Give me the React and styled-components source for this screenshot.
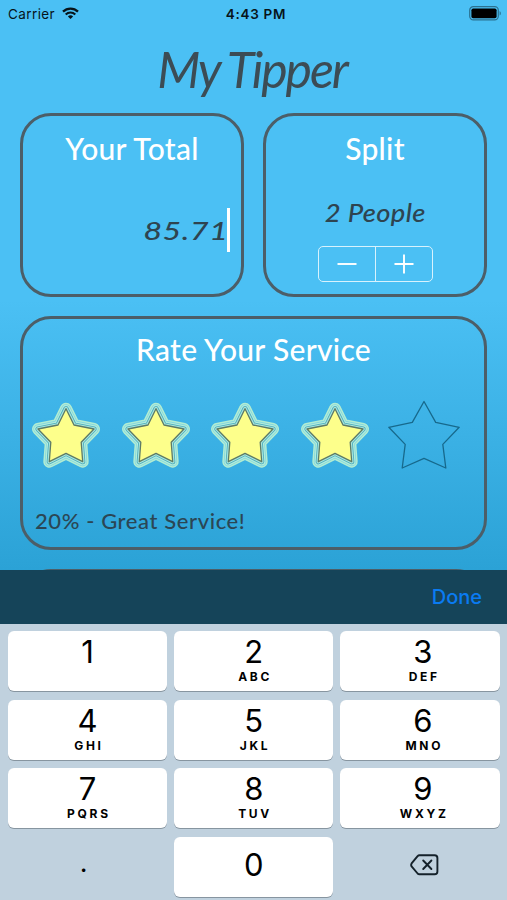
import React from "react";
import styled, { createGlobalStyle } from "styled-components";

const GlobalStyle = createGlobalStyle`
  * {
    box-sizing: border-box;
  }

  body {
    margin: 0;
    overflow: hidden;
  }
`;

const keys = [
  { digit: "1", letters: "" },
  { digit: "2", letters: "ABC" },
  { digit: "3", letters: "DEF" },
  { digit: "4", letters: "GHI" },
  { digit: "5", letters: "JKL" },
  { digit: "6", letters: "MNO" },
  { digit: "7", letters: "PQRS" },
  { digit: "8", letters: "TUV" },
  { digit: "9", letters: "WXYZ" },
];

const FILLED_STAR =
  "M36 10.7 L44 27 L64 31 L51.2 44.3 L52.7 63.7 L36 55.3 L19.3 63.7 L20.8 44.3 L8 31 L28 27 Z";
const EMPTY_STAR =
  "M36 3.5 L47.7 24.4 L71.2 29.3 L54.8 46.4 L57.8 70 L36 60.4 L14.2 70 L17.2 46.4 L0.8 29.3 L24.3 24.4 Z";

const Star = ({ filled }) => (
  <StarIcon viewBox="0 0 72 74">
    {filled ? (
      <>
        <path d={FILLED_STAR} stroke="#b2edd2" strokeWidth="12" />
        <path d={FILLED_STAR} stroke="#7dd3df" strokeWidth="9" />
        <path d={FILLED_STAR} stroke="#b0ecdc" strokeWidth="7.8" />
        <path d={FILLED_STAR} stroke="#4aa9bd" strokeWidth="5.2" />
        <path d={FILLED_STAR} stroke="#a6e6dd" strokeWidth="3.6" />
        <path d={FILLED_STAR} fill="#fdff8b" stroke="#5d7a66" strokeWidth="1.3" />
      </>
    ) : (
      <path d={EMPTY_STAR} fill="none" stroke="#17698c" strokeWidth="1.3" />
    )}
  </StarIcon>
);

const WifiIcon = () => (
  <svg width="17" height="13" viewBox="0 0 17 13" fill="none" stroke="#07141a">
    <path d="M1 4.6 C5.2 0.5 11.8 0.5 16 4.6" strokeWidth="2.3" />
    <path d="M3.7 7.5 C6.4 4.9 10.6 4.9 13.3 7.5" strokeWidth="2.1" />
    <path d="M8.5 12 L5.9 9.4 C7.3 8 9.7 8 11.1 9.4 Z" fill="#07141a" stroke="none" />
  </svg>
);

const BatteryIcon = () => (
  <svg width="33" height="15" viewBox="0 0 33 15">
    <rect x="0.7" y="0.7" width="28.6" height="13.2" rx="3.6" fill="none" stroke="#2b7190" strokeWidth="1.2" />
    <rect x="2.4" y="2.4" width="25.2" height="9.8" rx="1.8" fill="#000" />
    <path d="M30.6 5 C32.3 5.8 32.3 8.8 30.6 9.6 Z" fill="#2b7190" />
  </svg>
);

const BackspaceIcon = () => (
  <svg
    width="29"
    height="22"
    viewBox="0 0 29 22"
    fill="none"
    stroke="#14212a"
    strokeWidth="1.9"
    strokeLinecap="round"
    strokeLinejoin="round"
  >
    <path d="M9.4 1.3 H24.6 Q27.4 1.3 27.4 4.1 V17.5 Q27.4 20.3 24.6 20.3 H9.4 Q8.4 20.3 7.6 19.5 L1.6 12.4 Q0.7 10.9 1.6 9.4 L7.6 2.1 Q8.4 1.3 9.4 1.3 Z" />
    <path d="M13.2 6.5 L21.4 15 M21.4 6.5 L13.2 15" />
  </svg>
);

const App = () => {
  const rating = 4;

  return (
    <Phone>
      <GlobalStyle />
      <Screen>
        <StatusBar>
          <Carrier>
            Carrier
            <WifiIcon />
          </Carrier>
          <Clock>4:43 PM</Clock>
          <Battery>
            <BatteryIcon />
          </Battery>
        </StatusBar>
        <Title>My Tipper</Title>
        <Cards>
          <CardRow>
            <Card $height={184}>
              <CardTitle>Your Total</CardTitle>
              <TotalField>
                <TotalValue>85.71</TotalValue>
                <Cursor />
              </TotalField>
            </Card>
            <Card $height={184}>
              <CardTitle>Split</CardTitle>
              <People>2 People</People>
              <Stepper>
                <StepButton aria-label="Decrease">
                  <svg width="20" height="20" stroke="#fff" strokeWidth="1.9">
                    <path d="M0.5 10 H19.5" />
                  </svg>
                </StepButton>
                <StepButton aria-label="Increase">
                  <svg width="20" height="20" stroke="#fff" strokeWidth="1.9">
                    <path d="M0.5 10 H19.5 M10 0.5 V19.5" />
                  </svg>
                </StepButton>
              </Stepper>
            </Card>
          </CardRow>
          <Card $height={234}>
            <CardTitle>Rate Your Service</CardTitle>
            <Stars>
              {[1, 2, 3, 4, 5].map((value) => (
                <Star key={value} filled={value <= rating} />
              ))}
            </Stars>
            <RatingText>20% - Great Service!</RatingText>
          </Card>
          <Card $height={184} />
        </Cards>
      </Screen>
      <Toolbar>
        <DoneButton>Done</DoneButton>
      </Toolbar>
      <Keypad>
        {keys.map((key) => (
          <Key key={key.digit}>
            <Digit>{key.digit}</Digit>
            <Letters>{key.letters}</Letters>
          </Key>
        ))}
        <PlainKey $padding="0 8px 8px 0">.</PlainKey>
        <Key $centered>
          <Digit>0</Digit>
        </Key>
        <PlainKey $padding="0 0 3px 9px" aria-label="Delete">
          <BackspaceIcon />
        </PlainKey>
      </Keypad>
    </Phone>
  );
};

const Phone = styled.main`
  display: flex;
  flex-direction: column;
  width: 507px;
  height: 900px;
  overflow: hidden;
  font-family: Inter, "Liberation Sans", sans-serif;
`;

const Screen = styled.section`
  display: flex;
  flex-direction: column;
  flex: none;
  height: 570px;
  overflow: hidden;
  background: linear-gradient(#4bc0f4 0, #4bc0f4 300px, #2ba2d6 570px);
`;

const StatusBar = styled.header`
  display: grid;
  grid-template-columns: 1fr auto 1fr;
  align-items: center;
  flex: none;
  height: 27px;
  padding: 0 5px 0 8px;
  color: #07141a;
  font-size: 13.5px;
`;

const Carrier = styled.span`
  display: flex;
  align-items: center;
  gap: 7px;
  letter-spacing: 0.4px;
`;

const Clock = styled.span`
  margin-left: 2px;
  font-weight: 600;
  letter-spacing: 0.7px;
  font-size: 13.5px;
`;

const Battery = styled.span`
  display: flex;
  justify-content: flex-end;
`;

const Title = styled.h1`
  flex: none;
  height: 86px;
  margin: 0;
  padding: 11px 3px 0 0;
  color: #3c4c55;
  text-align: center;
  font: italic 400 50px/62px Lato, sans-serif;
  letter-spacing: -2.1px;
`;

const Cards = styled.div`
  display: flex;
  flex-direction: column;
  gap: 19px;
  padding: 0 20px;
`;

const CardRow = styled.div`
  display: grid;
  grid-template-columns: 1fr 1fr;
  gap: 19px;
`;

const Card = styled.section`
  display: flex;
  flex-direction: column;
  align-items: center;
  flex: none;
  height: ${(props) => props.$height}px;
  border: 3px solid #4c5e68;
  border-radius: 31px;
`;

const CardTitle = styled.h2`
  margin: 10px 0 0;
  color: #fff;
  font: 500 30px/40px Lato, sans-serif;
  letter-spacing: 0.3px;
  white-space: nowrap;

  ${CardRow} & {
    margin: 12px 0 -2px;
  }
`;

const TotalField = styled.div`
  display: flex;
  align-items: center;
  align-self: flex-end;
  margin: 42px 11px 0 0;
`;

const TotalValue = styled.span`
  margin-right: -1px;
  color: #2e4450;
  font: italic 500 25px/44px Lato, sans-serif;
  letter-spacing: 0.5px;
  transform: scaleX(1.28);
  transform-origin: right;
`;

const Cursor = styled.span`
  width: 3px;
  height: 44px;
  background: #fff;
`;

const People = styled.p`
  margin: 29px 0 0;
  color: #2e4450;
  font: italic 500 24px/36px Lato, sans-serif;
  letter-spacing: 0.3px;
  transform: scaleX(1.14);
`;

const Stepper = styled.div`
  display: flex;
  width: 115px;
  height: 36px;
  margin: 15px 0 0 1px;
  border: 1.5px solid #d8f2fd;
  border-radius: 5px;
`;

const StepButton = styled.button`
  display: flex;
  align-items: center;
  justify-content: center;
  flex: 1;
  padding: 0;
  border: 0;
  background: none;

  & + & {
    border-left: 1.5px solid #d8f2fd;
  }
`;

const Stars = styled.div`
  display: flex;
  align-self: stretch;
  justify-content: space-between;
  margin: 29px 24px 0 7px;
`;

const StarIcon = styled.svg`
  width: 72px;
  height: 74px;
  overflow: visible;
  stroke-linejoin: round;
`;

const RatingText = styled.p`
  align-self: flex-start;
  margin: 33px 0 0 12px;
  color: #2b4654;
  font: 500 22px/32px Lato, sans-serif;
  letter-spacing: 0.6px;
`;

const Toolbar = styled.div`
  display: flex;
  align-items: center;
  justify-content: flex-end;
  flex: none;
  height: 54px;
  padding-right: 25px;
  background: #154459;
`;

const DoneButton = styled.button`
  padding: 0;
  border: 0;
  background: none;
  color: #0a7bf2;
  font: 500 20px Inter, sans-serif;
`;

const Keypad = styled.div`
  display: grid;
  grid-template-columns: repeat(3, 1fr);
  grid-template-rows: repeat(4, 60px);
  gap: 8.5px 7px;
  flex: 1;
  padding: 7px 7.5px 0 8px;
  background: #c0d1de;
`;

const Key = styled.button`
  display: flex;
  flex-direction: column;
  align-items: center;
  justify-content: ${(props) => (props.$centered ? "center" : "flex-start")};
  padding: ${(props) => (props.$centered ? "0 0 3px" : "3px 0 0")};
  border: 0;
  border-radius: 6px;
  background: #fff;
  box-shadow: 0 1px 0 #8795a0;
  color: #000;
  font-family: Inter, sans-serif;

  &:nth-child(3n) {
    padding-left: 6px;
  }
`;

const Digit = styled.span`
  font-size: 31px;
  line-height: 36px;
`;

const Letters = styled.span`
  margin-right: -2.7px;
  font-size: 12px;
  font-weight: 700;
  line-height: 14px;
  letter-spacing: 2.7px;
`;

const PlainKey = styled.button`
  display: flex;
  align-items: center;
  justify-content: center;
  padding: ${(props) => props.$padding};
  border: 0;
  background: none;
  color: #000;
  font: 27px Inter, sans-serif;
`;

export default App;
